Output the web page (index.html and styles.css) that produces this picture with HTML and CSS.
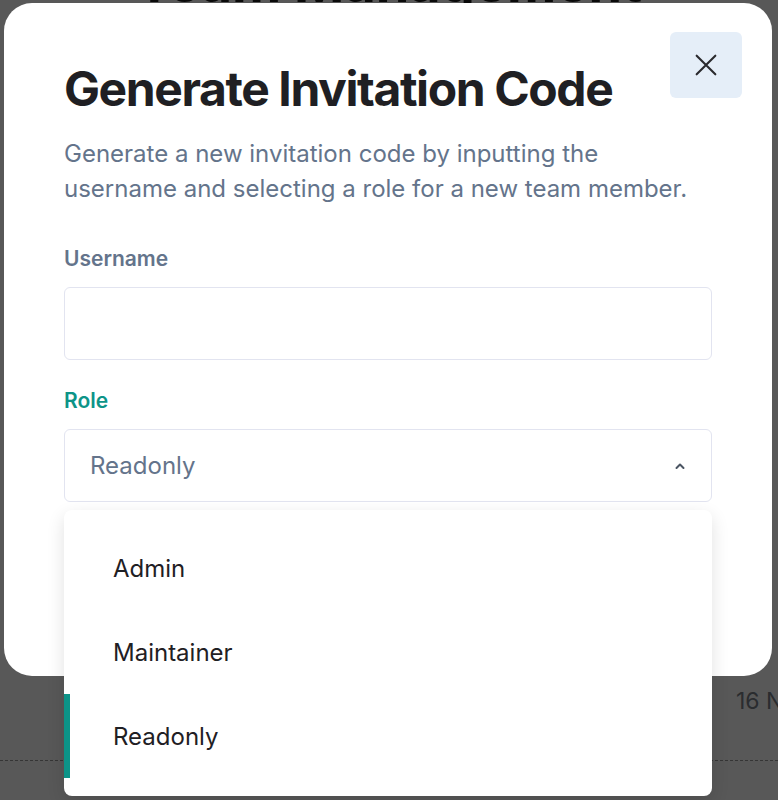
FILE: index.html
```html
<!DOCTYPE html>
<html>
<head>
<meta charset="utf-8">
<link rel="stylesheet" href="styles.css">
</head>
<body>
<div class="page">
  <h1 class="page-title">Team Management</h1>
  <div class="page-row">
    <span class="cell-date">16 Nov 2023</span>
  </div>
  <div class="page-divider"></div>
</div>
<div class="overlay"></div>
<div class="modal">
  <div class="modal-head">
    <h2 class="modal-title">Generate Invitation Code</h2>
    <button class="close-btn" aria-label="Close">
      <svg width="28" height="28" viewBox="0 0 24 24" fill="none" stroke="#2a2a2e" stroke-width="1.8" stroke-linecap="round"><path d="M4 4L20 20M20 4L4 20"/></svg>
    </button>
  </div>
  <p class="modal-desc">Generate a new invitation code by inputting the<br>username and selecting a role for a new team member.</p>
  <div class="field">
    <label class="field-label">Username</label>
    <div class="input"></div>
  </div>
  <div class="field">
    <label class="field-label active">Role</label>
    <div class="select">
      <span class="select-value">Readonly</span>
      <svg width="14" height="14" viewBox="0 0 14 14" fill="none" stroke="#4b5563" stroke-width="2" stroke-linecap="round" stroke-linejoin="round"><path d="M3.5 9L7 5.5L10.5 9"/></svg>
    </div>
  </div>
</div>
<ul class="menu">
  <li class="menu-item">Admin</li>
  <li class="menu-item">Maintainer</li>
  <li class="menu-item selected">Readonly</li>
</ul>
</body>
</html>
```
FILE: styles.css
```css
html, body {
  margin: 0;
  padding: 0;
  height: 800px;
  overflow: hidden;
}
body {
  font-family: Inter, "Noto Sans", sans-serif;
  background: #ffffff;
  position: relative;
}
.page {
  height: 800px;
  display: flex;
  flex-direction: column;
}
.page-title {
  margin: -50px 0 0;
  text-align: center;
  font-size: 54px;
  line-height: 66px;
  font-weight: 700;
  color: #1a1a1a;
}
.page-row {
  margin-top: 670px;
  padding-left: 736px;
  font-size: 23px;
  line-height: 30px;
  color: #7a7f88;
  white-space: nowrap;
}
.page-divider {
  margin-top: 44px;
  border-top: 1px dashed #9a9a9a;
}
.overlay {
  position: absolute;
  inset: 0;
  background: rgba(0, 0, 0, 0.655);
}
.modal {
  position: absolute;
  left: 4px;
  top: 3px;
  width: 768px;
  height: 673px;
  box-sizing: border-box;
  background: #ffffff;
  border-radius: 28px;
  padding: 29px 30px 0 60px;
}
.modal-head {
  display: flex;
  justify-content: space-between;
  align-items: flex-start;
}
.modal-title {
  margin: 29px 0 0;
  font-size: 48px;
  line-height: 56px;
  font-weight: 700;
  color: #1f1f23;
  letter-spacing: -1.4px;
}
.close-btn {
  width: 72px;
  height: 66px;
  border: none;
  border-radius: 6px;
  background: #e5eef8;
  display: flex;
  align-items: center;
  justify-content: center;
  padding: 0;
}
.modal-desc {
  margin: 19px 0 39px;
  font-size: 24px;
  line-height: 35px;
  color: #64748b;
}
.field {
  margin-top: 27px;
  margin-right: 30px;
}
.field-label {
  display: block;
  font-size: 21px;
  line-height: 28px;
  font-weight: 600;
  color: #64748b;
  margin-bottom: 14px;
}
.field-label.active {
  color: #0d9488;
}
.input, .select {
  height: 73px;
  box-sizing: border-box;
  border: 1px solid #e2e4f0;
  border-radius: 6px;
}
.select {
  display: flex;
  align-items: center;
  justify-content: space-between;
  padding: 0 24px 0 25px;
}
.select-value {
  font-size: 24px;
  color: #64748b;
}
.menu {
  position: absolute;
  left: 64px;
  top: 510px;
  width: 648px;
  margin: 0;
  padding: 16px 0 18px;
  list-style: none;
  background: #ffffff;
  border-radius: 8px;
  box-shadow: 0 6px 18px rgba(0, 0, 0, 0.12);
}
.menu-item {
  height: 84px;
  display: flex;
  align-items: center;
  padding-left: 43px;
  font-size: 24px;
  color: #1f2024;
  border-left: 6px solid transparent;
  box-sizing: border-box;
}
.menu-item.selected {
  border-left-color: #0d9488;
}
```
